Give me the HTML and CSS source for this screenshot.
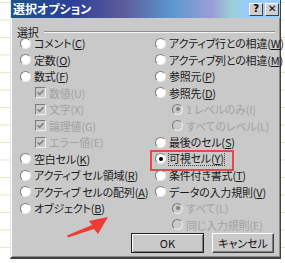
FILE: index.html
```html
<!DOCTYPE html>
<html lang="ja">
<head>
  <meta charset="UTF-8">
  <title>選択オプション</title>
  <link rel="stylesheet" href="styles.css">
</head>
<body>

  <div class="dialog">
    <div class="titlebar">
      <span class="title">選択オプション</span>
      <div class="tbtns">
        <span class="tbtn">?</span>
        <span class="tbtn">✕</span>
      </div>
    </div>

    <div class="content">
      <div class="group-head"><span>選択</span><i class="rule"></i></div>

      <div class="cols">
        <div class="col">
          <div class="opt"><span class="radio"></span>コメント(<u>C</u>)</div>
          <div class="opt"><span class="radio"></span>定数(<u>O</u>)</div>
          <div class="opt"><span class="radio"></span>数式(<u>F</u>)</div>
          <div class="opt sub off"><span class="check"><svg viewBox="0 0 9 9"><path d="M1.5 4.2 L3.6 6.4 L7.6 2.2"/></svg></span>数値(U)</div>
          <div class="opt sub off"><span class="check"><svg viewBox="0 0 9 9"><path d="M1.5 4.2 L3.6 6.4 L7.6 2.2"/></svg></span>文字(X)</div>
          <div class="opt sub off"><span class="check"><svg viewBox="0 0 9 9"><path d="M1.5 4.2 L3.6 6.4 L7.6 2.2"/></svg></span>論理値(G)</div>
          <div class="opt sub off"><span class="check"><svg viewBox="0 0 9 9"><path d="M1.5 4.2 L3.6 6.4 L7.6 2.2"/></svg></span>エラー値(E)</div>
          <div class="opt"><span class="radio"></span>空白セル(<u>K</u>)</div>
          <div class="opt"><span class="radio"></span>アクティブ セル領域(<u>R</u>)</div>
          <div class="opt"><span class="radio"></span>アクティブ セルの配列(<u>A</u>)</div>
          <div class="opt"><span class="radio"></span>オブジェクト(<u>B</u>)</div>
        </div>

        <div class="col">
          <div class="opt"><span class="radio"></span>アクティブ行との相違(<u>W</u>)</div>
          <div class="opt"><span class="radio"></span>アクティブ列との相違(<u>M</u>)</div>
          <div class="opt"><span class="radio"></span>参照元(<u>P</u>)</div>
          <div class="opt"><span class="radio"></span>参照先(<u>D</u>)</div>
          <div class="opt sub2 off"><span class="radio on"></span>1 レベルのみ(I)</div>
          <div class="opt sub2 off"><span class="radio"></span>すべてのレベル(L)</div>
          <div class="opt"><span class="radio"></span>最後のセル(<u>S</u>)</div>
          <div class="opt marked"><span class="radio on"></span><span class="focus">可視セル(<u>Y</u>)</span></div>
          <div class="opt"><span class="radio"></span>条件付き書式(<u>T</u>)</div>
          <div class="opt"><span class="radio"></span>データの入力規則(<u>V</u>)</div>
          <div class="opt sub2 off"><span class="radio on"></span>すべて(L)</div>
          <div class="opt sub2 off"><span class="radio"></span>同じ入力規則(E)</div>
        </div>
      </div>

      <div class="actions">
        <button class="btn default">OK</button>
        <button class="btn cancel">キャンセル</button>
      </div>
    </div>

    <svg class="arrow" viewBox="0 0 60 30">
      <polygon points="6,25.5 31,15 28,11 47,7 37,24 33,19 7,27.5"/>
    </svg>
  </div>

</body>
</html>
```

FILE: styles.css
```css
* {
  box-sizing: border-box;
}

body {
  margin: 0;
  height: 263px;
  background-color: #fff;
  background-image: linear-gradient(to bottom, #d9edc2 0, #d9edc2 1px, transparent 1px);
  background-size: 100% 17.5px;
  background-position: 0 2px;
  font-family: "Noto Sans CJK JP", sans-serif;
  font-feature-settings: "palt";
  font-size: 11px;
  letter-spacing: -0.2px;
  color: #1a1a1a;
  overflow: hidden;
}

.dialog {
  position: relative;
  margin-left: 10px;
  width: 271px;
  height: 259px;
  background: #c9c9c9;
  border-left: 1px solid #e6e6e6;
  border-right: 1px solid #404040;
  border-bottom: 2px solid #404040;
  box-shadow: inset 1px 0 #fff, inset -1px -1px #8a8a8a;
}

.titlebar {
  display: flex;
  align-items: center;
  justify-content: space-between;
  height: 18px;
  padding-left: 2px;
  background: linear-gradient(to right, #1d5588 0%, #2b3f98 22%, #5e5c9c 42%, #5b98cf 60%, #9b9fd6 75%, #99cfd4 82%, #99ccff 88%, #99ccff 100%);
}

.title {
  color: #fff;
  font-weight: bold;
  font-size: 12px;
  line-height: 18px;
  letter-spacing: 0;
}

.tbtns {
  display: flex;
  gap: 2px;
  margin-right: 1px;
}

.tbtn {
  display: flex;
  align-items: center;
  justify-content: center;
  width: 14px;
  height: 13px;
  background: #cfcfcf;
  border: 1px solid;
  border-color: #fff #404040 #404040 #fff;
  font-family: "DejaVu Sans", sans-serif;
  font-weight: bold;
  font-size: 10px;
  line-height: 1;
  color: #000;
}

.content {
  padding-left: 9px;
}

.group-head {
  display: flex;
  align-items: center;
  height: 12px;
  margin-top: 8px;
  margin-left: -3px;
  line-height: 12px;
}

.rule {
  flex: 1;
  margin: 0 5px 0 5px;
  border-top: 1px solid #8c8c8c;
  border-bottom: 1px solid #f4f4f4;
}

.cols {
  display: grid;
  grid-template-columns: 135px 1fr;
  margin-top: -3px;
}

.col {
  display: flex;
  flex-direction: column;
}

.opt {
  display: flex;
  align-items: center;
  height: 16.5px;
  white-space: nowrap;
}

.opt.sub {
  padding-left: 15px;
}

.opt.sub2 {
  padding-left: 17px;
}

.opt.off {
  color: #a2a2a2;
}

.radio {
  position: relative;
  flex: none;
  width: 11px;
  height: 11px;
  margin-right: 3px;
  border-radius: 50%;
  background: #fff;
  border: 1px solid;
  border-color: #7c7c7c #ededed #ededed #7c7c7c;
}

.off .radio {
  background: #c9c9c9;
}

.radio.on::after {
  content: "";
  position: absolute;
  left: 2.5px;
  top: 2.5px;
  width: 4px;
  height: 4px;
  border-radius: 50%;
  background: #000;
}

.off .radio.on::after {
  background: #808080;
}

.check {
  display: flex;
  flex: none;
  width: 11px;
  height: 11px;
  margin-right: 3px;
  background: #c9c9c9;
  border: 1px solid;
  border-color: #7c7c7c #f0f0f0 #f0f0f0 #7c7c7c;
}

.check svg {
  width: 9px;
  height: 9px;
  fill: none;
  stroke: #808080;
  stroke-width: 1.6;
}

.marked {
  position: relative;
}

.marked::after {
  content: "";
  position: absolute;
  left: -5px;
  top: -0.5px;
  width: 80px;
  height: 17px;
  border: 2px solid #e5484a;
}

.focus {
  outline: 1px dotted #444;
  outline-offset: 0;
  line-height: 13px;
}

.actions {
  display: flex;
  justify-content: flex-end;
  gap: 8px;
  height: 20px;
  padding-right: 6px;
}

.btn {
  height: 20px;
  padding: 0;
  background: #c9c9c9;
  font-family: "Noto Sans CJK JP", sans-serif;
  font-feature-settings: "palt";
  font-size: 11px;
  color: #111;
}

.btn.default {
  width: 73px;
  border: 1px solid #202020;
  box-shadow: inset 1px 1px #fff, inset -1px -1px #808080;
}

.btn.cancel {
  width: 62px;
  border: 1px solid;
  border-color: #fff #404040 #404040 #fff;
  box-shadow: inset -1px -1px #808080;
}

.arrow {
  position: absolute;
  left: 50px;
  top: 210px;
  width: 60px;
  height: 30px;
  fill: #f03a36;
}
```
